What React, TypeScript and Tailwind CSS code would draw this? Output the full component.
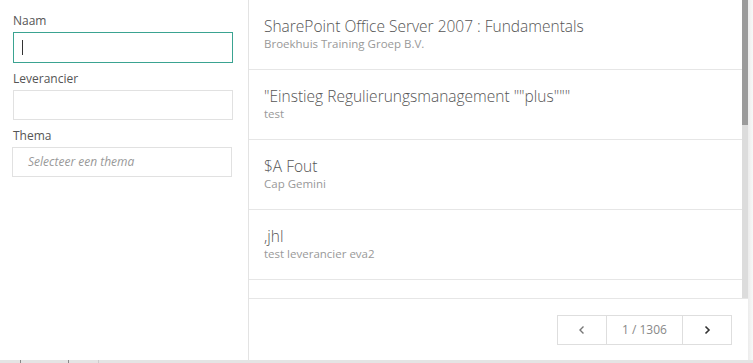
const items = [
  { title: "SharePoint Office Server 2007 : Fundamentals", sub: "Broekhuis Training Groep B.V." },
  { title: "\"Einstieg Regulierungsmanagement \"\"plus\"\"\"", sub: "test" },
  { title: "$A Fout", sub: "Cap Gemini" },
  { title: ",jhl", sub: "test leverancier eva2" },
];

function Field({ label, children }: { label: string; children: React.ReactNode }) {
  return (
    <div className="flex flex-col">
      <label className="text-[12px] leading-[18px] text-[#555] mb-[2px]">{label}</label>
      {children}
    </div>
  );
}

export default function App() {
  return (
    <div className="w-[753px] h-[363px] flex flex-col bg-white font-['Open_Sans',sans-serif] overflow-hidden">
      <div className="flex flex-1 min-h-0">
        {/* filters */}
        <aside className="w-[249px] shrink-0 border-r border-[#e3e3e3] pl-[13px] pt-[12px] flex flex-col gap-[7px]">
          <Field label="Naam">
            <div className="w-[220px] h-[31px] border border-[#3aa391] flex items-center pl-[8px]">
              <span className="w-px h-[15px] bg-[#333]" />
            </div>
          </Field>
          <Field label="Leverancier">
            <div className="w-[220px] h-[30px] border border-[#e1e1e1]" />
          </Field>
          <Field label="Thema">
            <div className="w-[220px] h-[30px] -ml-px border border-[#e1e1e1] flex items-center pl-[15px] text-[12px] italic text-[#999]">
              Selecteer een thema
            </div>
          </Field>
        </aside>

        {/* results */}
        <main className="flex-1 flex flex-col min-w-0">
          <div className="flex flex-1 min-h-0">
            <ul className="flex-1 overflow-hidden">
              {items.map((it) => (
                <li key={it.title} className="h-[70px] border-b border-[#e6e6e6] pl-[15px] pt-[16px]">
                  <div className="text-[15.5px] leading-[20px] font-[350] text-[#555]">{it.title}</div>
                  <div className="text-[11.5px] leading-[16px] text-[#999]">{it.sub}</div>
                </li>
              ))}
              <li className="h-[70px]" />
            </ul>
            <div className="w-[6px] flex flex-col">
              <div className="h-[125px] bg-[#9b9b9b]" />
              <div className="flex-1 bg-[#dcdcdc]" />
            </div>
          </div>
          <footer className="h-[62px] border-t border-[#e6e6e6] flex items-center justify-end pr-[16px]">
            <div className="flex h-[30px] border border-[#dedede] text-[12px]">
              <button className="w-[49px] flex items-center justify-center border-r border-[#dedede] text-[#777]">
                <svg width="8" height="10" viewBox="0 0 8 10" fill="none" stroke="currentColor" strokeWidth="1.4">
                  <path d="M5.5 1.5 2 5l3.5 3.5" />
                </svg>
              </button>
              <span className="w-[76px] flex items-center justify-center text-[#888] border-r border-[#dedede]">1 / 1306</span>
              <button className="w-[48px] flex items-center justify-center text-[#333]">
                <svg width="8" height="10" viewBox="0 0 8 10" fill="none" stroke="currentColor" strokeWidth="1.6">
                  <path d="M2.5 1.5 6 5 2.5 8.5" />
                </svg>
              </button>
            </div>
          </footer>
        </main>
        <div className="w-[5px] bg-gradient-to-r from-[#ececec] to-[#f8f8f8]" />
      </div>
      <div className="h-[3px] flex bg-[#e4e4e4]">
        <div className="w-[20px]" />
        <div className="w-px bg-[#888]" />
        <div className="w-[47px]" />
        <div className="w-px bg-[#888]" />
        <div className="w-[29px]" />
        <div className="w-px bg-[#ccc]" />
      </div>
    </div>
  );
}
